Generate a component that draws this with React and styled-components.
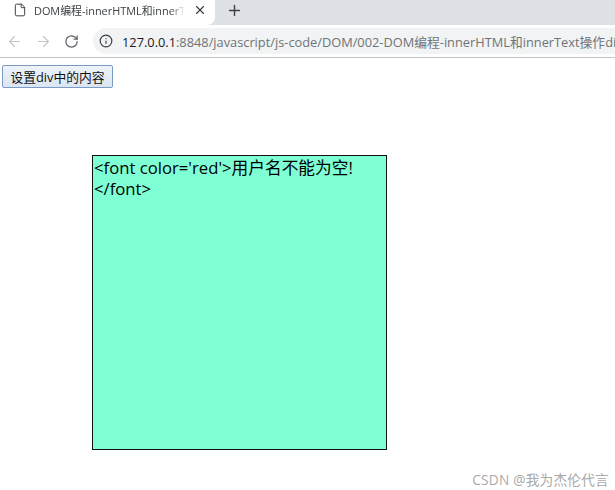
import React from "react";
import styled, { createGlobalStyle } from "styled-components";
import { ArrowLeft, ArrowRight, RotateCw, Info, Plus, X, File } from "lucide-react";

const GlobalStyle = createGlobalStyle`
  html, body {
    margin: 0;
    padding: 0;
    background: #fff;
    overflow: hidden;
  }
  body {
    font-family: "Open Sans", "Noto Sans CJK SC", sans-serif;
  }
`;

const Window = styled.div`
  position: relative;
  width: 615px;
  height: 490px;
  overflow: hidden;
`;

const TabStrip = styled.div`
  display: flex;
  align-items: flex-start;
  height: 25px;
  background: #dee1e6;
`;

const Tab = styled.div`
  display: flex;
  align-items: center;
  width: 215px;
  height: 100%;
  padding: 0 8px 5px 13px;
  box-sizing: border-box;
  background: #fff;
  border-bottom-right-radius: 8px;
  color: #3c4043;

  svg {
    flex-shrink: 0;
  }
`;

const TabTitle = styled.span`
  flex: 1;
  margin-left: 7px;
  margin-right: 8px;
  font-size: 10.9px;
  white-space: nowrap;
  overflow: hidden;
  -webkit-mask-image: linear-gradient(to right, #000 90%, transparent 100%);
  mask-image: linear-gradient(to right, #000 90%, transparent 100%);
`;

const NewTab = styled.div`
  display: flex;
  margin: 2px 0 0 11px;
  color: #3c4043;
`;

const Toolbar = styled.div`
  display: flex;
  align-items: center;
  height: 32px;
  padding-left: 6px;
  background: #fff;
  border-bottom: 1px solid #c4c4c4;
`;

const NavButton = styled.div`
  display: flex;
  width: 17px;
  margin-right: 12px;
  color: ${({ $disabled }) => ($disabled ? "#c3c6ca" : "#5f6368")};
`;

const AddressBar = styled.div`
  display: flex;
  flex: 1;
  align-items: center;
  height: 26px;
  min-width: 0;
  padding-left: 6px;
  border-radius: 13px 0 0 13px;
  background: #f1f3f4;

  svg {
    flex-shrink: 0;
  }
`;

const Url = styled.span`
  flex: 1;
  min-width: 0;
  margin-left: 9px;
  font-size: 12.8px;
  white-space: nowrap;
  overflow: hidden;
  color: #6f7377;
`;

const Host = styled.span`
  color: #202124;
`;

const Page = styled.main`
  padding: 7px 2px 0;
`;

const ActionButton = styled.button`
  display: block;
  width: 111px;
  height: 23px;
  padding: 0;
  border: 1px solid #7a9cc4;
  border-radius: 2px;
  background: linear-gradient(#eef3fa, #dbe5f1);
  font-family: inherit;
  font-size: 12.8px;
  color: #111;
`;

const ContentBox = styled.div`
  width: 295px;
  height: 295px;
  margin: 67px 0 0 90px;
  padding: 1px 0 0 1px;
  box-sizing: border-box;
  border: 1px solid #111;
  background: #7fffd4;
  font-size: 16.7px;
  line-height: 21px;
  color: #000;
`;

const Watermark = styled.span`
  position: absolute;
  right: 6px;
  bottom: 1px;
  font-size: 13.7px;
  letter-spacing: 0.2px;
  color: #a9a9a9;
`;

const App = () => {
  return (
    <Window>
      <GlobalStyle />
      <TabStrip>
        <Tab>
          <File size={14} strokeWidth={1.7} />
          <TabTitle>DOM编程-innerHTML和innerText操作div</TabTitle>
          <X size={14} strokeWidth={2} />
        </Tab>
        <NewTab>
          <Plus size={17} strokeWidth={2} />
        </NewTab>
      </TabStrip>
      <Toolbar>
        <NavButton $disabled>
          <ArrowLeft size={17} strokeWidth={1.7} />
        </NavButton>
        <NavButton $disabled>
          <ArrowRight size={17} strokeWidth={1.7} />
        </NavButton>
        <NavButton>
          <RotateCw size={15} strokeWidth={2} />
        </NavButton>
        <AddressBar>
          <Info size={14} strokeWidth={2} color="#3c4043" />
          <Url>
            <Host>127.0.0.1</Host>:8848/javascript/js-code/DOM/002-DOM编程-innerHTML和innerText操作div.html
          </Url>
        </AddressBar>
      </Toolbar>
      <Page>
        <ActionButton>设置div中的内容</ActionButton>
        <ContentBox>{"<font color='red'>用户名不能为空!"}<br />{"</font>"}</ContentBox>
      </Page>
      <Watermark>CSDN @我为杰伦代言</Watermark>
    </Window>
  );
};

export default App;
